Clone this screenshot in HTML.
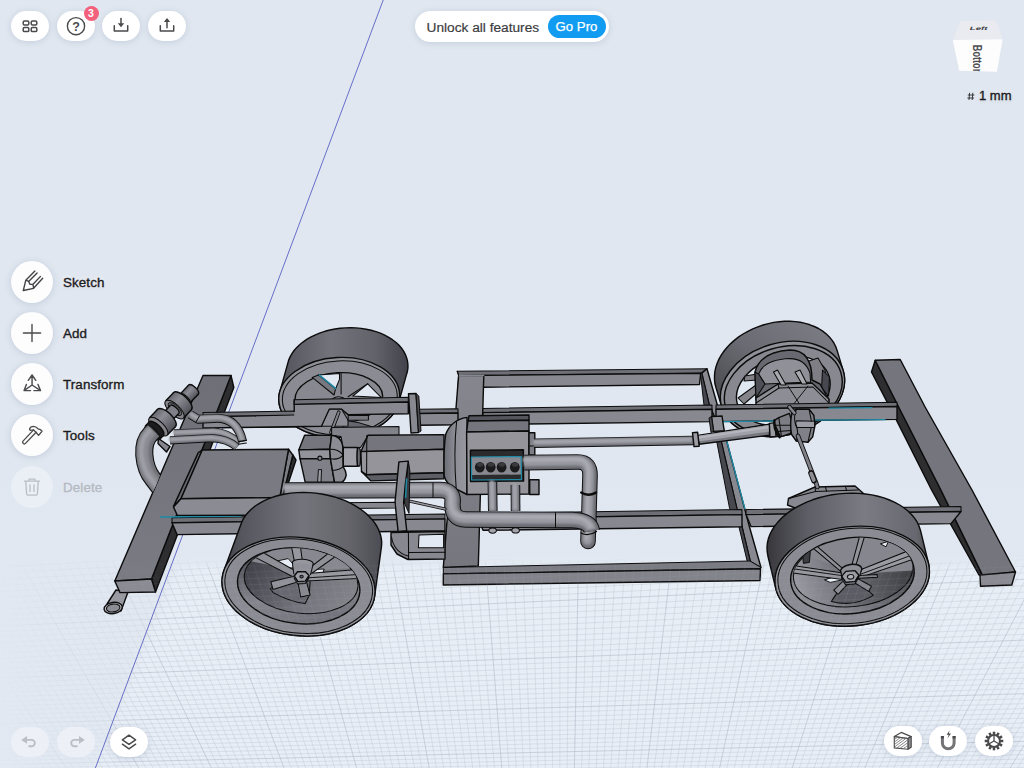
<!DOCTYPE html>
<html><head><meta charset="utf-8"><title>Shapr3D</title><style>
*{box-sizing:border-box;margin:0;padding:0}
html,body{width:1024px;height:768px;overflow:hidden}
body{font-family:"Liberation Sans", sans-serif;background:#dfe7f0;position:relative}
#bg{position:absolute;left:0;top:0;width:1024px;height:768px;background:linear-gradient(180deg,#e0e7f0 0%,#e0e7f0 60%,#e2e9f2 100%)}
svg{position:absolute;left:0;top:0}
.btn{position:absolute;width:38px;height:30px;border-radius:15px;background:#fff;box-shadow:0 1px 6px rgba(120,140,170,.28)}
.btn.dis{background:rgba(240,243,248,.75);box-shadow:none}
.circ{position:absolute;left:11px;width:42px;height:42px;border-radius:21px;background:#fdfdfe;box-shadow:0 1px 7px rgba(120,140,170,.30)}
.circ.dis{background:rgba(236,240,246,.8);box-shadow:none}
.lbl{position:absolute;left:63px;font-size:13.4px;color:#1c1c1e;-webkit-text-stroke:.35px #1c1c1e;letter-spacing:.1px;text-shadow:0 0 4px #fff,0 0 7px rgba(255,255,255,.9),0 1px 3px rgba(90,100,120,.35);line-height:16px;height:16px}
.lbl.dis{color:#b4b9c2;-webkit-text-stroke:.3px #b4b9c2;text-shadow:none}
#pill{position:absolute;left:415px;top:11px;width:194px;height:31px;border-radius:15.5px;background:#fff;box-shadow:0 1px 6px rgba(120,140,170,.28)}
#pill .t{position:absolute;left:11.5px;top:9.4px;font-size:13.7px;line-height:16px;color:#3c3c40;-webkit-text-stroke:.2px #3c3c40}
#gopro{position:absolute;left:132.5px;top:4px;width:58px;height:23px;border-radius:11.5px;background:#119cf2;color:#fff;font-size:13.2px;line-height:23.6px;text-align:center;-webkit-text-stroke:.25px #fff}
#badge{position:absolute;left:83.5px;top:5.5px;width:15px;height:15px;border-radius:7.5px;background:#f2607b;color:#fff;font-size:10.5px;font-weight:bold;line-height:15px;text-align:center}
#mm{position:absolute;left:979px;top:88px;font-size:13px;line-height:16px;color:#1c1c1e;-webkit-text-stroke:.35px #1c1c1e;text-shadow:0 0 4px #fff,0 1px 3px rgba(90,100,120,.4)}
</style></head><body>
<div id="bg"></div>
<svg width="1024" height="768" viewBox="0 0 1024 768"><defs><linearGradient id="gf" x1="0" y1="559" x2="0" y2="580" gradientUnits="userSpaceOnUse"><stop offset="0" stop-color="#fff" stop-opacity="0"/><stop offset=".4" stop-color="#fff" stop-opacity=".7"/><stop offset="1" stop-color="#fff" stop-opacity="1"/></linearGradient><linearGradient id="gfx" x1="0" y1="0" x2="150" y2="0" gradientUnits="userSpaceOnUse"><stop offset="0" stop-color="#000" stop-opacity=".95"/><stop offset=".35" stop-color="#000" stop-opacity=".45"/><stop offset="1" stop-color="#000" stop-opacity="0"/></linearGradient><filter id="gb" x="0" y="0" width="1024" height="768" filterUnits="userSpaceOnUse"><feGaussianBlur stdDeviation="5"/></filter><mask id="gm" maskUnits="userSpaceOnUse" x="0" y="0" width="1024" height="768"><rect x="0" y="0" width="1024" height="768" fill="url(#gf)"/><polygon points="0,540 181,540 92,776 0,776" fill="#000" opacity=".5"/><rect x="0" y="0" width="150" height="768" fill="url(#gfx)"/></mask></defs><polygon points="178,566 1030,566 1030,775 92,775" fill="#eaf0f7" opacity=".8" filter="url(#gb)"/><g mask="url(#gm)"><g id="gl"><path d="M-404.6 556.0L-183.9 772.0M-395.2 556.0L-176.7 772.0M-385.9 556.0L-169.4 772.0M-376.5 556.0L-162.2 772.0M-367.1 556.0L-155.0 772.0M-348.4 556.0L-140.5 772.0M-339.0 556.0L-133.3 772.0M-329.7 556.0L-126.1 772.0M-320.3 556.0L-118.9 772.0M-310.9 556.0L-111.7 772.0M-301.6 556.0L-104.4 772.0M-292.2 556.0L-97.2 772.0M-282.9 556.0L-90.0 772.0M-273.5 556.0L-82.8 772.0M-254.8 556.0L-68.3 772.0M-245.4 556.0L-61.1 772.0M-236.0 556.0L-53.9 772.0M-226.7 556.0L-46.7 772.0M-217.3 556.0L-39.5 772.0M-208.0 556.0L-32.2 772.0M-198.6 556.0L-25.0 772.0M-189.2 556.0L-17.8 772.0M-179.9 556.0L-10.6 772.0M-161.1 556.0L3.9 772.0M-151.8 556.0L11.1 772.0M-142.4 556.0L18.3 772.0M-133.0 556.0L25.5 772.0M-123.7 556.0L32.8 772.0M-114.3 556.0L40.0 772.0M-105.0 556.0L47.2 772.0M-95.6 556.0L54.4 772.0M-86.2 556.0L61.6 772.0M-67.5 556.0L76.1 772.0M-58.1 556.0L83.3 772.0M-48.8 556.0L90.5 772.0M-39.4 556.0L97.7 772.0M-30.1 556.0L105.0 772.0M-20.7 556.0L112.2 772.0M-11.3 556.0L119.4 772.0M-2.0 556.0L126.6 772.0M7.4 556.0L133.8 772.0M26.1 556.0L148.3 772.0M35.5 556.0L155.5 772.0M44.9 556.0L162.7 772.0M54.2 556.0L169.9 772.0M63.6 556.0L177.2 772.0M72.9 556.0L184.4 772.0M82.3 556.0L191.6 772.0M91.7 556.0L198.8 772.0M101.0 556.0L206.0 772.0M119.8 556.0L220.5 772.0M129.1 556.0L227.7 772.0M138.5 556.0L234.9 772.0M147.8 556.0L242.2 772.0M157.2 556.0L249.4 772.0M166.6 556.0L256.6 772.0M175.9 556.0L263.8 772.0M185.3 556.0L271.0 772.0M194.7 556.0L278.3 772.0M213.4 556.0L292.7 772.0M222.8 556.0L299.9 772.0M232.1 556.0L307.1 772.0M241.5 556.0L314.4 772.0M250.8 556.0L321.6 772.0M260.2 556.0L328.8 772.0M269.6 556.0L336.0 772.0M278.9 556.0L343.2 772.0M288.3 556.0L350.5 772.0M307.0 556.0L364.9 772.0M316.4 556.0L372.1 772.0M325.7 556.0L379.3 772.0M335.1 556.0L386.6 772.0M344.5 556.0L393.8 772.0M353.8 556.0L401.0 772.0M363.2 556.0L408.2 772.0M372.6 556.0L415.4 772.0M381.9 556.0L422.7 772.0M400.7 556.0L437.1 772.0M410.0 556.0L444.3 772.0M419.4 556.0L451.6 772.0M428.7 556.0L458.8 772.0M438.1 556.0L466.0 772.0M447.5 556.0L473.2 772.0M456.8 556.0L480.4 772.0M466.2 556.0L487.7 772.0M475.6 556.0L494.9 772.0M494.3 556.0L509.3 772.0M503.6 556.0L516.5 772.0M513.0 556.0L523.8 772.0M522.4 556.0L531.0 772.0M531.7 556.0L538.2 772.0M541.1 556.0L545.4 772.0M550.5 556.0L552.6 772.0M559.8 556.0L559.9 772.0M569.2 556.0L567.1 772.0M587.9 556.0L581.5 772.0M597.3 556.0L588.7 772.0M606.6 556.0L596.0 772.0M616.0 556.0L603.2 772.0M625.4 556.0L610.4 772.0M634.7 556.0L617.6 772.0M644.1 556.0L624.9 772.0M653.5 556.0L632.1 772.0M662.8 556.0L639.3 772.0M681.5 556.0L653.7 772.0M690.9 556.0L661.0 772.0M700.3 556.0L668.2 772.0M709.6 556.0L675.4 772.0M719.0 556.0L682.6 772.0M728.4 556.0L689.8 772.0M737.7 556.0L697.1 772.0M747.1 556.0L704.3 772.0M756.5 556.0L711.5 772.0M775.2 556.0L725.9 772.0M784.5 556.0L733.2 772.0M793.9 556.0L740.4 772.0M803.3 556.0L747.6 772.0M812.6 556.0L754.8 772.0M822.0 556.0L762.0 772.0M831.4 556.0L769.3 772.0M840.7 556.0L776.5 772.0M850.1 556.0L783.7 772.0M868.8 556.0L798.1 772.0M878.2 556.0L805.4 772.0M887.5 556.0L812.6 772.0M896.9 556.0L819.8 772.0M906.3 556.0L827.0 772.0M915.6 556.0L834.3 772.0M925.0 556.0L841.5 772.0M934.4 556.0L848.7 772.0M943.7 556.0L855.9 772.0M962.4 556.0L870.4 772.0M971.8 556.0L877.6 772.0M981.2 556.0L884.8 772.0M990.5 556.0L892.0 772.0M999.9 556.0L899.2 772.0M1009.3 556.0L906.5 772.0M1018.6 556.0L913.7 772.0M1028.0 556.0L920.9 772.0M1037.3 556.0L928.1 772.0M1056.1 556.0L942.6 772.0M1065.4 556.0L949.8 772.0M1074.8 556.0L957.0 772.0M1084.2 556.0L964.2 772.0M1093.5 556.0L971.4 772.0M1102.9 556.0L978.7 772.0M1112.3 556.0L985.9 772.0M1121.6 556.0L993.1 772.0M1131.0 556.0L1000.3 772.0M1149.7 556.0L1014.8 772.0M1159.1 556.0L1022.0 772.0M1168.4 556.0L1029.2 772.0M1177.8 556.0L1036.4 772.0M1187.2 556.0L1043.7 772.0M1196.5 556.0L1050.9 772.0M1205.9 556.0L1058.1 772.0M1215.2 556.0L1065.3 772.0M1224.6 556.0L1072.5 772.0M1243.3 556.0L1087.0 772.0M1252.7 556.0L1094.2 772.0M1262.1 556.0L1101.4 772.0M1271.4 556.0L1108.6 772.0M1280.8 556.0L1115.9 772.0M1290.2 556.0L1123.1 772.0M1299.5 556.0L1130.3 772.0M1308.9 556.0L1137.5 772.0M1318.2 556.0L1144.7 772.0M1337.0 556.0L1159.2 772.0M1346.3 556.0L1166.4 772.0M1355.7 556.0L1173.6 772.0M1365.1 556.0L1180.8 772.0M0 554.0L1024 495.0M0 560.5L1024 502.6M0 573.2L1024 517.4M0 579.4L1024 524.7M0 585.5L1024 531.8M0 591.5L1024 538.9M0 597.5L1024 545.9M0 603.4L1024 552.7M0 609.2L1024 559.5M0 614.9L1024 566.2M0 620.5L1024 572.8M0 631.6L1024 585.8M0 637.0L1024 592.1M0 642.4L1024 598.4M0 647.6L1024 604.6M0 652.9L1024 610.7M0 658.0L1024 616.7M0 663.1L1024 622.7M0 668.1L1024 628.5M0 673.1L1024 634.3M0 682.8L1024 645.7M0 687.6L1024 651.3M0 692.3L1024 656.8M0 696.9L1024 662.3M0 701.6L1024 667.7M0 706.1L1024 673.0M0 710.6L1024 678.3M0 715.0L1024 683.5M0 719.4L1024 688.6M0 728.1L1024 698.7M0 732.3L1024 703.7M0 736.5L1024 708.6M0 740.6L1024 713.4M0 744.7L1024 718.2M0 748.8L1024 723.0M0 752.8L1024 727.7M0 756.8L1024 732.3M0 760.7L1024 736.9M0 768.4L1024 745.9M0 772.2L1024 750.4M0 775.9L1024 754.7M0 779.6L1024 759.1M0 783.3L1024 763.4M0 786.9L1024 767.6M0 790.5L1024 771.8M0 794.1L1024 776.0M0 797.6L1024 780.1M0 804.5L1024 788.2M0 807.9L1024 792.2M0 811.3L1024 796.1M0 814.6L1024 800.1" stroke="#a9b4c4" stroke-width=".7" fill="none" opacity=".27"/><path d="M-357.8 556.0L-147.8 772.0M-264.1 556.0L-75.6 772.0M-170.5 556.0L-3.4 772.0M-76.9 556.0L68.9 772.0M16.8 556.0L141.1 772.0M110.4 556.0L213.3 772.0M204.0 556.0L285.5 772.0M297.7 556.0L357.7 772.0M391.3 556.0L429.9 772.0M484.9 556.0L502.1 772.0M578.6 556.0L574.3 772.0M672.2 556.0L646.5 772.0M765.8 556.0L718.7 772.0M859.4 556.0L790.9 772.0M953.1 556.0L863.1 772.0M1046.7 556.0L935.3 772.0M1140.3 556.0L1007.6 772.0M1234.0 556.0L1079.8 772.0M1327.6 556.0L1152.0 772.0M0 566.9L1024 510.0M0 626.1L1024 579.3M0 678.0L1024 640.1M0 723.8L1024 693.7M0 764.5L1024 741.4M0 801.1L1024 784.2" stroke="#9ca7b8" stroke-width=".95" fill="none" opacity=".31"/></g></g></svg>
<svg width="1024" height="768" viewBox="0 0 1024 768"><line x1="383.6" y1="-1" x2="95" y2="769" stroke="#666fc8" stroke-width="1"/></svg>
<svg width="1024" height="768" viewBox="0 0 1024 768">
<defs>
<filter id="soft" x="-5%" y="-5%" width="110%" height="110%" filterUnits="userSpaceOnUse" ><feGaussianBlur stdDeviation=".9"/></filter>
<linearGradient id="gTireA" x1="0" y1="0" x2="1" y2="0"><stop offset="0" stop-color="#3e3f46"/><stop offset=".12" stop-color="#55565d"/><stop offset=".5" stop-color="#74757c"/><stop offset=".8" stop-color="#64646a"/><stop offset="1" stop-color="#4c4d54"/></linearGradient>
<linearGradient id="gTireB" x1="0" y1="0" x2="1" y2="0"><stop offset="0" stop-color="#52535a"/><stop offset=".4" stop-color="#73747b"/><stop offset=".75" stop-color="#62636a"/><stop offset="1" stop-color="#42434a"/></linearGradient>
<linearGradient id="gTireC" x1="0" y1="1" x2="1" y2="0"><stop offset="0" stop-color="#37373b"/><stop offset=".5" stop-color="#6a6b72"/><stop offset="1" stop-color="#808188"/></linearGradient>
<linearGradient id="gDish" x1="0" y1="0" x2="1" y2="1"><stop offset="0" stop-color="#77787f"/><stop offset=".55" stop-color="#5a5b62"/><stop offset="1" stop-color="#3d3d41"/></linearGradient>
<linearGradient id="gDish2" x1="1" y1="0" x2="0" y2="1"><stop offset="0" stop-color="#6c6d74"/><stop offset="1" stop-color="#444448"/></linearGradient>
<linearGradient id="gPipeH" x1="0" y1="0" x2="0" y2="1"><stop offset="0" stop-color="#8e8f96"/><stop offset=".3" stop-color="#bcbdc4"/><stop offset=".6" stop-color="#a6a7ae"/><stop offset="1" stop-color="#707178"/></linearGradient>
<linearGradient id="gPipeV" x1="0" y1="0" x2="1" y2="0"><stop offset="0" stop-color="#8e8f96"/><stop offset=".35" stop-color="#bcbdc4"/><stop offset=".65" stop-color="#a6a7ae"/><stop offset="1" stop-color="#707178"/></linearGradient>
<linearGradient id="gDome" x1="0" y1="0" x2="1" y2="0"><stop offset="0" stop-color="#6c6d74"/><stop offset=".5" stop-color="#8e8f96"/><stop offset="1" stop-color="#97989f"/></linearGradient>
<linearGradient id="gBar" x1="0" y1="0" x2="0" y2="1"><stop offset="0" stop-color="#6f7077"/><stop offset="1" stop-color="#7b7c83"/></linearGradient>
<linearGradient id="gFront" x1="0" y1="0" x2="0" y2="1"><stop offset="0" stop-color="#909198"/><stop offset="1" stop-color="#77787f"/></linearGradient>
<linearGradient id="gTireD" x1="0" y1="0" x2="1" y2="0"><stop offset="0" stop-color="#37373b"/><stop offset=".25" stop-color="#5e5f66"/><stop offset=".6" stop-color="#7b7c83"/><stop offset=".92" stop-color="#67686f"/><stop offset="1" stop-color="#4c4c50"/></linearGradient>
<linearGradient id="gDishR" x1="0" y1="1" x2="1" y2=".2"><stop offset="0" stop-color="#a2a3aa"/><stop offset=".45" stop-color="#707178"/><stop offset="1" stop-color="#37373b"/></linearGradient>
<linearGradient id="gDishL" x1=".7" y1="1" x2=".1" y2="0"><stop offset="0" stop-color="#707178"/><stop offset=".4" stop-color="#85868d"/><stop offset="1" stop-color="#404148"/></linearGradient>
<linearGradient id="gBackR" x1="0" y1=".6" x2="1" y2=".5"><stop offset="0" stop-color="#9a9ba2"/><stop offset=".5" stop-color="#66676e"/><stop offset="1" stop-color="#3c3c40"/></linearGradient>
<linearGradient id="gBackL" x1="0" y1=".3" x2="1" y2=".6"><stop offset="0" stop-color="#3e3f46"/><stop offset=".3" stop-color="#57585f"/><stop offset=".6" stop-color="#73747b"/><stop offset="1" stop-color="#83838a"/></linearGradient>
<linearGradient id="gLeftM" x1="0" y1="0" x2="0" y2="1"><stop offset="0" stop-color="#86878e"/><stop offset="1" stop-color="#76777e"/></linearGradient>
</defs>

<polygon points="278.8,400.6 278.8,397.1 279.3,393.6 280.3,390.1 288.6,360.4 290.0,357.1 291.9,353.7 294.1,350.5 296.8,347.4 299.9,344.5 303.3,341.8 307.1,339.2 311.1,336.9 315.5,334.8 320.1,332.9 324.9,331.3 329.9,330.0 334.9,329.0 340.1,328.3 345.4,327.9 350.7,327.7 355.9,327.9 361.1,328.4 366.2,329.2 371.1,330.2 375.9,331.6 380.4,333.2 384.7,335.1 388.7,337.3 392.4,339.7 395.8,342.2 398.8,345.0 401.4,348.0 403.6,351.1 405.3,354.3 406.6,357.7 407.5,361.1 407.9,364.5 407.9,368.0 407.4,371.5 406.4,374.9 398.1,404.6 396.7,408.1 394.8,411.4 392.6,414.6 389.9,417.7 386.8,420.6 383.4,423.3 379.6,425.9 375.6,428.2 371.2,430.3 366.6,432.2 361.8,433.8 356.9,435.1 351.8,436.1 346.6,436.8 341.3,437.2 336.0,437.4 330.8,437.2 325.6,436.7 320.5,435.9 315.6,434.9 310.8,433.5 306.3,431.9 302.0,430.0 298.0,427.8 294.3,425.4 290.9,422.9 287.9,420.1 285.3,417.1 283.1,414.0 281.4,410.8 280.1,407.4 279.2,404.0" fill="url(#gTireB)" stroke="#0c0c0d" stroke-width="1.42" stroke-linejoin="round" />
<ellipse cx="339.2" cy="397.4" rx="60.5" ry="39.9" transform="rotate(-3 339.2 397.4)" fill="#909198" stroke="#0c0c0d" stroke-width="1.42" />
<ellipse cx="339.8" cy="397.8" rx="57.5" ry="36.9" transform="rotate(-3 339.8 397.8)" fill="#8b8c93" stroke="#0c0c0d" stroke-width="1.05" />
<ellipse cx="338.8" cy="398.0" rx="43.9" ry="25.3" transform="rotate(-3 338.8 398.0)" fill="#888990" stroke="#0c0c0d" stroke-width="1.42" />
<polygon points="318.4,374.9 339.5,373.6 339.5,379.4 335.6,388.8" fill="#e1e8f1" stroke="#0c0c0d" stroke-width="1.05" stroke-linejoin="round" />
<polygon points="312.2,377.4 318.4,374.9 335.6,388.8 334.0,395.0" fill="#77787f" stroke="#0c0c0d" stroke-width="1.05" stroke-linejoin="round" />
<polyline points="319.4,375.2 335.9,388.6" fill="none" stroke="#1f8aa5" stroke-width="1.5" stroke-linecap="round" stroke-linejoin="round" />
<polygon points="367.7,383.8 381.4,397.6 352.8,396.0" fill="#e1e8f1" stroke="#0c0c0d" stroke-width="1.05" stroke-linejoin="round" />
<polyline points="341.1,373.4 341.1,394.0" fill="none" stroke="#0c0c0d" stroke-width="1.05" stroke-linecap="round" stroke-linejoin="round" />
<polyline points="367.7,383.6 348.1,396.8" fill="none" stroke="#0c0c0d" stroke-width="1.05" stroke-linecap="round" stroke-linejoin="round" />
<path d="M330 401 Q338 393 346.6 400 Z" fill="#909198" stroke="#0c0c0d" stroke-width="1.05" stroke-linejoin="round" stroke-linecap="round" />
<path d="M343 420 Q372 423 398 440 L384 441 Q365 432 343 428 Z" fill="#66676e" stroke="#0c0c0d" stroke-width="1.05" stroke-linejoin="round" stroke-linecap="round" />
<polygon points="714.5,375.4 714.9,371.3 715.9,367.1 717.3,363.0 719.1,358.9 721.4,354.9 724.1,351.0 727.2,347.2 730.7,343.6 734.6,340.1 738.7,336.9 743.1,334.0 747.9,331.3 752.8,328.9 757.9,326.8 763.1,325.0 768.4,323.6 773.8,322.4 779.2,321.7 784.6,321.3 790.0,321.3 795.2,321.6 800.3,322.3 805.2,323.4 809.9,324.8 814.3,326.5 818.5,328.5 822.3,330.9 825.8,333.6 828.9,336.5 831.6,339.6 833.9,343.0 835.7,346.6 837.1,350.4 843.1,370.4 844.1,374.3 844.5,378.3 844.5,382.4 844.1,386.5 843.1,390.6 841.7,394.8 839.9,398.9 837.6,402.9 834.9,406.8 831.8,410.6 828.3,414.2 824.4,417.6 820.3,420.9 815.9,423.8 811.1,426.5 806.2,428.9 801.1,431.0 795.9,432.8 790.6,434.2 785.2,435.4 779.8,436.1 774.4,436.5 769.0,436.5 763.8,436.2 758.7,435.5 753.8,434.4 749.1,433.1 744.7,431.3 740.5,429.3 736.7,426.9 733.2,424.2 730.1,421.3 727.4,418.2 725.1,414.8 723.3,411.2 721.9,407.4 715.9,387.4 714.9,383.5 714.5,379.5" fill="url(#gTireC)" stroke="#0c0c0d" stroke-width="1.42" stroke-linejoin="round" />
<ellipse cx="782.5" cy="388.9" rx="63.4" ry="45.9" transform="rotate(-17 782.5 388.9)" fill="#909198" stroke="#0c0c0d" stroke-width="1.42" />
<ellipse cx="783.3" cy="390.1" rx="60.2" ry="42.7" transform="rotate(-17 783.3 390.1)" fill="#888990" stroke="#0c0c0d" stroke-width="1.42" />
<ellipse cx="783.3" cy="390.5" rx="47.9" ry="33.5" transform="rotate(-17 783.3 390.5)" fill="#dfe7f0" stroke="#0c0c0d" stroke-width="1.42" />
<polygon points="738.0,398.0 756.0,385.0 758.0,392.0 744.0,404.0" fill="#84848a" stroke="#0c0c0d" stroke-width="1.05" stroke-linejoin="round" />
<polygon points="745.0,376.0 757.0,374.0 757.0,380.0 744.0,381.0" fill="#808086" stroke="#0c0c0d" stroke-width="1.05" stroke-linejoin="round" />
<polygon points="806.0,362.0 818.0,358.0 826.0,372.0 824.0,392.0 812.0,384.0" fill="#7e7e84" stroke="#0c0c0d" stroke-width="1.05" stroke-linejoin="round" />
<polygon points="822.5,370.0 829.5,377.0 828.6,396.0 821.6,388.0" fill="#47484f" stroke="#0c0c0d" stroke-width="1.05" stroke-linejoin="round" />
<path d="M756 400 L755 372 Q760 352 790 350 Q812 350 812 380 L820 384 L829 400 Z" fill="#686970" stroke="#0c0c0d" stroke-width="1.42" stroke-linejoin="round" stroke-linecap="round" />
<path d="M758.6 374 Q764 359.6 790 358.6 Q805 358.6 810 373 L810.6 382 L765 384 Z" fill="#909198" stroke="#0c0c0d" stroke-width="1.05" stroke-linejoin="round" stroke-linecap="round" />
<polygon points="755.0,372.0 758.6,374.0 765.0,384.0 756.0,398.0" fill="#4e4f56" stroke="#0c0c0d" stroke-width="1.05" stroke-linejoin="round" />
<polygon points="756.0,398.0 778.0,384.0 812.0,383.0 829.0,399.0 829.0,405.0 756.0,406.0" fill="#8d8e95" stroke="#0c0c0d" stroke-width="1.42" stroke-linejoin="round" />
<polyline points="778.0,384.0 779.0,388.0 756.0,403.0" fill="none" stroke="#0c0c0d" stroke-width="1.05" stroke-linecap="round" stroke-linejoin="round" />
<polyline points="779.0,388.0 813.0,387.0 829.0,403.0" fill="none" stroke="#0c0c0d" stroke-width="1.05" stroke-linecap="round" stroke-linejoin="round" />
<polygon points="773.5,372.0 777.5,370.0 786.0,385.0 781.0,385.0" fill="#a9aab1" stroke="#0c0c0d" stroke-width="1.05" stroke-linejoin="round" />
<polygon points="795.0,372.0 800.0,370.0 807.0,384.0 802.0,384.0" fill="#a9aab1" stroke="#0c0c0d" stroke-width="1.05" stroke-linejoin="round" />
<polyline points="788.0,386.0 802.0,408.0" fill="none" stroke="#0c0c0d" stroke-width="0.95" stroke-linecap="round" stroke-linejoin="round" />
<polyline points="808.0,386.0 789.0,410.0" fill="none" stroke="#0c0c0d" stroke-width="0.95" stroke-linecap="round" stroke-linejoin="round" />
<polygon points="107.0,604.0 116.0,590.0 128.0,592.0 121.0,611.0" fill="#999aa1" stroke="#0c0c0d" stroke-width="1.42" stroke-linejoin="round" />
<ellipse cx="113.2" cy="608.0" rx="9.2" ry="5.6" transform="rotate(-8 113.2 608.0)" fill="#b9bac1" stroke="#0c0c0d" stroke-width="1.42" />
<ellipse cx="113.2" cy="608.0" rx="6.8" ry="3.9" transform="rotate(-8 113.2 608.0)" fill="#8d8e95" stroke="#0c0c0d" stroke-width="1.05" />
<polygon points="231.0,375.5 233.8,387.5 155.5,592.0 151.5,579.0" fill="#2e2e31" stroke="#0c0c0d" stroke-width="1.42" stroke-linejoin="round" />
<polygon points="203.0,375.5 231.0,375.5 151.5,579.0 114.8,581.0" fill="url(#gBar)" stroke="#0c0c0d" stroke-width="1.42" stroke-linejoin="round" />
<polygon points="114.8,581.0 151.5,579.0 155.5,592.0 120.0,592.6" fill="#8b8c93" stroke="#0c0c0d" stroke-width="1.42" stroke-linejoin="round" />
<polygon points="875.2,360.3 871.5,372.0 895.8,418.8 931.6,490.0 979.0,575.0 982.6,575.4 940.9,490.0 899.3,408.2" fill="#2e2e31" stroke="#0c0c0d" stroke-width="1.42" stroke-linejoin="round" />
<polygon points="875.2,360.3 900.2,359.5 925.1,407.0 972.0,490.0 1015.5,572.0 982.6,575.4 940.9,490.0 899.3,408.2" fill="#75767d" stroke="#0c0c0d" stroke-width="1.42" stroke-linejoin="round" />
<polygon points="980.0,575.0 1015.5,572.0 1011.8,585.0 980.5,586.3" fill="#8b8c93" stroke="#0c0c0d" stroke-width="1.42" stroke-linejoin="round" />
<polygon points="457.2,371.3 707.0,368.7 700.7,373.3 459.0,375.6" fill="#6f7077" stroke="#0c0c0d" stroke-width="1.05" stroke-linejoin="round" />
<polygon points="459.0,375.6 700.7,373.3 699.5,384.5 483.5,387.2 458.0,387.4" fill="#888990" stroke="#0c0c0d" stroke-width="1.42" stroke-linejoin="round" />
<polygon points="458.6,375.6 483.8,375.4 478.3,566.0 443.3,567.5" fill="url(#gLeftM)" stroke="#0c0c0d" stroke-width="1.42" stroke-linejoin="round" />
<polyline points="458.8,375.6 483.6,375.4" fill="none" stroke="#86878e" stroke-width="1.6" stroke-linecap="round" stroke-linejoin="round" />
<polyline points="457.2,371.3 458.6,375.6" fill="none" stroke="#0c0c0d" stroke-width="1.05" stroke-linecap="round" stroke-linejoin="round" />
<polygon points="707.0,368.7 717.2,404.5 721.6,422.0 744.6,508.5 749.5,527.0 761.0,567.5 750.4,561.7 742.1,527.0 736.9,508.5 716.7,422.0 709.2,404.5 701.8,373.1" fill="#888990" stroke="#0c0c0d" stroke-width="1.42" stroke-linejoin="round" />
<polygon points="701.8,373.1 709.2,404.5 716.7,422.0 736.9,508.5 742.1,527.0 750.4,561.7 747.3,561.7 739.0,527.0 729.6,508.5 713.0,422.0 703.9,404.5 700.4,373.1" fill="#47484f" stroke="#0c0c0d" stroke-width="1" stroke-linejoin="round" />
<polygon points="443.3,567.5 750.0,561.0 761.0,567.5 760.5,568.7 443.3,573.9" fill="#7b7c83" stroke="#0c0c0d" stroke-width="1" stroke-linejoin="round" />
<polygon points="443.3,573.9 760.5,568.7 760.0,580.5 443.3,585.0" fill="#83848b" stroke="#0c0c0d" stroke-width="1.42" stroke-linejoin="round" />
<polygon points="203.0,412.5 296.0,411.1 296.0,415.3 203.0,416.7" fill="#6f7077" stroke="#0c0c0d" stroke-width="1.05" stroke-linejoin="round" />
<polygon points="203.0,416.7 296.0,415.3 296.0,426.8 203.0,428.0" fill="#888990" stroke="#0c0c0d" stroke-width="1.42" stroke-linejoin="round" />
<polygon points="418.0,409.3 458.0,408.8 458.0,413.0 418.0,413.5" fill="#6f7077" stroke="#0c0c0d" stroke-width="1.05" stroke-linejoin="round" />
<polygon points="418.0,413.5 458.0,413.0 458.0,424.8 418.0,425.3" fill="#888990" stroke="#0c0c0d" stroke-width="1.42" stroke-linejoin="round" />
<polygon points="483.0,408.4 712.0,405.0 712.0,409.2 483.0,412.6" fill="#6f7077" stroke="#0c0c0d" stroke-width="1.05" stroke-linejoin="round" />
<polygon points="483.0,412.6 712.0,409.2 712.0,421.6 483.0,424.5" fill="#888990" stroke="#0c0c0d" stroke-width="1.42" stroke-linejoin="round" />
<polygon points="716.0,405.0 897.0,402.3 897.0,406.5 716.0,409.2" fill="#6f7077" stroke="#0c0c0d" stroke-width="1.05" stroke-linejoin="round" />
<polygon points="716.0,409.2 897.0,406.5 897.0,419.4 716.0,421.6" fill="#888990" stroke="#0c0c0d" stroke-width="1.42" stroke-linejoin="round" />
<polygon points="294.2,399.7 408.3,397.3 408.3,402.0 294.2,404.4" fill="#6f7077" stroke="#0c0c0d" stroke-width="1.05" stroke-linejoin="round" />
<polygon points="294.2,404.4 408.3,402.0 408.3,413.8 348.0,414.6 341.6,409.2 329.4,409.2 321.6,426.3 256.0,427.3 256.0,416.4 294.2,415.6" fill="#888990" stroke="#0c0c0d" stroke-width="0" stroke-linejoin="round" />
<polyline points="294.2,404.4 408.3,402.0 408.3,413.8 348.0,414.6 341.6,409.2 329.4,409.2 321.6,426.3 256.0,427.3" fill="none" stroke="#0c0c0d" stroke-width="1.42" stroke-linecap="round" stroke-linejoin="round" />
<polyline points="294.2,399.7 294.2,411.4" fill="none" stroke="#0c0c0d" stroke-width="1.42" stroke-linecap="round" stroke-linejoin="round" />
<polygon points="329.4,409.2 341.6,409.2 348.0,420.0 348.0,426.0 321.6,426.3" fill="#8d8e95" stroke="#0c0c0d" stroke-width="1.05" stroke-linejoin="round" />
<polyline points="338.8,412.2 331.0,432.5" fill="none" stroke="#0c0c0d" stroke-width="3.6" stroke-linecap="round" stroke-linejoin="round" />
<polyline points="338.8,412.2 331.0,432.5" fill="none" stroke="#808188" stroke-width="2" stroke-linecap="round" stroke-linejoin="round" />
<polygon points="348.2,415.4 368.4,415.2 368.4,420.0 348.2,420.2" fill="#77787f" stroke="#0c0c0d" stroke-width="1.05" stroke-linejoin="round" />
<polygon points="172.0,517.8 445.0,513.9 445.0,518.9 172.0,522.8" fill="#6f7077" stroke="#0c0c0d" stroke-width="1.05" stroke-linejoin="round" />
<polygon points="172.0,522.8 445.0,518.9 445.0,530.8 177.0,534.6" fill="#888990" stroke="#0c0c0d" stroke-width="1.42" stroke-linejoin="round" />
<polygon points="478.0,513.4 742.0,509.6 742.0,514.6 478.0,518.4" fill="#6f7077" stroke="#0c0c0d" stroke-width="1.05" stroke-linejoin="round" />
<polygon points="478.0,518.4 742.0,514.6 742.0,526.7 483.0,530.3" fill="#888990" stroke="#0c0c0d" stroke-width="1.42" stroke-linejoin="round" />
<polygon points="746.0,509.6 961.0,506.5 961.0,511.5 746.0,514.6" fill="#6f7077" stroke="#0c0c0d" stroke-width="1.05" stroke-linejoin="round" />
<polygon points="746.0,514.6 961.0,511.5 951.0,523.6 751.0,526.6" fill="#888990" stroke="#0c0c0d" stroke-width="1.42" stroke-linejoin="round" />
<polyline points="160.5,517.0 241.0,516.0" fill="none" stroke="#1f8aa5" stroke-width="1.3" stroke-linecap="round" stroke-linejoin="round" />
<polyline points="723.0,421.6 775.0,421.0" fill="none" stroke="#1f8aa5" stroke-width="1.3" stroke-linecap="round" stroke-linejoin="round" />
<polyline points="815.0,420.2 885.0,419.6" fill="none" stroke="#1f8aa5" stroke-width="1.3" stroke-linecap="round" stroke-linejoin="round" />
<polyline points="829.0,408.2 872.0,407.6" fill="none" stroke="#1f8aa5" stroke-width="1.3" stroke-linecap="round" stroke-linejoin="round" />
<polyline points="721.8,422.5 744.8,508.5" fill="none" stroke="#1f8aa5" stroke-width="1.3" stroke-linecap="round" stroke-linejoin="round" />
<polygon points="408.5,393.8 416.0,393.5 418.5,432.5 411.0,433.0" fill="#888990" stroke="#0c0c0d" stroke-width="1.42" stroke-linejoin="round" />
<polygon points="416.0,393.5 418.8,396.0 421.0,431.0 418.5,432.5" fill="#4c4c50" stroke="#0c0c0d" stroke-width="0.95" stroke-linejoin="round" />
<polygon points="292.8,455.0 296.0,460.0 286.0,490.0 283.6,493.4" fill="#2e2e31" stroke="#0c0c0d" stroke-width="1.42" stroke-linejoin="round" />
<polygon points="288.5,449.3 292.8,455.0 283.6,493.4 279.8,497.5" fill="#7e7f86" stroke="#0c0c0d" stroke-width="1.42" stroke-linejoin="round" />
<polygon points="202.3,450.0 198.3,452.6 173.5,506.4 181.0,498.8" fill="#66676e" stroke="#0c0c0d" stroke-width="1.42" stroke-linejoin="round" />
<polygon points="202.3,450.0 288.5,449.3 279.8,497.5 181.0,498.8" fill="#7a7b82" stroke="#0c0c0d" stroke-width="1.42" stroke-linejoin="round" />
<polygon points="181.0,498.8 279.8,497.5 274.0,515.2 177.3,515.4 173.5,507.0" fill="#8b8c93" stroke="#0c0c0d" stroke-width="1.42" stroke-linejoin="round" />
<polygon points="331.6,427.6 399.0,426.6 399.0,435.6 368.0,436.0 360.6,447.5 343.0,447.5 341.0,436.4 331.6,435.2" fill="#82838a" stroke="#0c0c0d" stroke-width="1.05" stroke-linejoin="round" />
<polygon points="304.6,435.2 331.6,435.2 329.8,449.3 298.8,449.9" fill="#75767d" stroke="#0c0c0d" stroke-width="1.42" stroke-linejoin="round" />
<polygon points="298.8,449.9 329.8,449.3 330.4,458.7 300.0,458.7" fill="#93949b" stroke="#0c0c0d" stroke-width="1.42" stroke-linejoin="round" />
<polygon points="300.0,458.7 330.4,458.7 334.5,482.1 305.2,482.1" fill="#808188" stroke="#0c0c0d" stroke-width="1.42" stroke-linejoin="round" />
<path d="M331.6 435.2 Q341 436 342.7 445.8 L343.3 466.9 Q346 471 346.2 475 Q345 481 341.6 482.1 L334.5 482.1 L330.4 458.7 L329.8 449.3 Z" fill="#8c8d94" stroke="#0c0c0d" stroke-width="1.42" stroke-linejoin="round" stroke-linecap="round" />
<path d="M329.8 449.3 Q338 449 342.9 454.6" fill="none" stroke="#0c0c0d" stroke-width="1.05" stroke-linejoin="round" stroke-linecap="round" />
<path d="M330.4 458.7 Q338 460.4 343 455.4" fill="none" stroke="#0c0c0d" stroke-width="1.05" stroke-linejoin="round" stroke-linecap="round" />
<path d="M332.4 470.6 Q340 470 345.4 464.8" fill="none" stroke="#0c0c0d" stroke-width="1.05" stroke-linejoin="round" stroke-linecap="round" />
<ellipse cx="319.9" cy="458.2" rx="2.1" ry="2.1" transform="rotate(0 319.9 458.2)" fill="#888990" stroke="#0c0c0d" stroke-width="1.05" />
<polygon points="318.4,469.6 321.6,469.6 321.0,482.0 317.6,482.0" fill="#9a9ba2" stroke="#0c0c0d" stroke-width="0.95" stroke-linejoin="round" />
<polygon points="343.3,447.5 357.4,447.5 357.4,466.3 343.3,466.3" fill="#a0a1a8" stroke="#0c0c0d" stroke-width="1.42" stroke-linejoin="round" />
<ellipse cx="358.8" cy="456.9" rx="1.8" ry="9.4" transform="rotate(0 358.8 456.9)" fill="#6c6d74" stroke="#0c0c0d" stroke-width="1.42" />
<polygon points="367.9,435.2 444.0,434.6 444.0,449.3 360.9,451.6" fill="#75767d" stroke="#0c0c0d" stroke-width="1.42" stroke-linejoin="round" />
<polygon points="360.9,451.6 444.0,449.3 444.0,472.7 365.9,474.7 361.5,471.6" fill="#94949a" stroke="#0c0c0d" stroke-width="1.42" stroke-linejoin="round" />
<polygon points="365.9,474.7 444.0,472.7 444.0,478.8 370.9,480.9 361.5,471.6" fill="#5e5f66" stroke="#0c0c0d" stroke-width="1.42" stroke-linejoin="round" />
<polyline points="366.8,435.6 366.6,474.6" fill="none" stroke="#0c0c0d" stroke-width="1.05" stroke-linecap="round" stroke-linejoin="round" />
<path d="M467 417.4 Q451 420 445.6 434.6 Q443.4 449 444.2 476 Q446 483 453 487.4 L467 494.5 Z" fill="url(#gDome)" stroke="#0c0c0d" stroke-width="1.42" stroke-linejoin="round" stroke-linecap="round" />
<path d="M456.6 421.4 Q453.4 452 456.2 489" fill="none" stroke="#0c0c0d" stroke-width="1.05" stroke-linejoin="round" stroke-linecap="round" />
<polygon points="469.0,415.8 529.0,415.0 529.0,420.3 468.0,421.0" fill="#55565d" stroke="#0c0c0d" stroke-width="1.42" stroke-linejoin="round" />
<polygon points="468.0,421.0 529.0,420.3 529.0,431.0 466.6,432.0" fill="#75767d" stroke="#0c0c0d" stroke-width="1.42" stroke-linejoin="round" />
<polygon points="466.6,432.0 529.0,431.0 529.0,494.0 467.0,494.5" fill="#94949a" stroke="#0c0c0d" stroke-width="1.42" stroke-linejoin="round" />
<polygon points="470.4,450.3 523.4,449.8 523.6,481.0 470.6,481.5" fill="#2b2b2e" stroke="#0c0c0d" stroke-width="1.42" stroke-linejoin="round" />
<polygon points="471.4,457.0 521.2,456.6 521.2,474.5 471.4,475.0" fill="#888990" stroke="#0c0c0d" stroke-width="0" stroke-linejoin="round" />
<polygon points="471.4,457.0 521.2,456.6 521.4,479.6 471.6,480.0" fill="none" stroke="#1f8aa5" stroke-width="1.2" stroke-linejoin="round" />
<ellipse cx="479.8" cy="467.2" rx="4.9" ry="5.3" transform="rotate(0 479.8 467.2)" fill="#1b1b1d" stroke="#0c0c0d" stroke-width="0" />
<ellipse cx="480.1" cy="464.6" rx="3.1" ry="2.2" transform="rotate(0 480.1 464.6)" fill="#3a3a3d" stroke="#0c0c0d" stroke-width="0" />
<ellipse cx="490.7" cy="467.2" rx="4.9" ry="5.3" transform="rotate(0 490.7 467.2)" fill="#1b1b1d" stroke="#0c0c0d" stroke-width="0" />
<ellipse cx="491.0" cy="464.6" rx="3.1" ry="2.2" transform="rotate(0 491.0 464.6)" fill="#3a3a3d" stroke="#0c0c0d" stroke-width="0" />
<ellipse cx="501.6" cy="467.2" rx="4.9" ry="5.3" transform="rotate(0 501.6 467.2)" fill="#1b1b1d" stroke="#0c0c0d" stroke-width="0" />
<ellipse cx="501.9" cy="464.6" rx="3.1" ry="2.2" transform="rotate(0 501.9 464.6)" fill="#3a3a3d" stroke="#0c0c0d" stroke-width="0" />
<ellipse cx="514.8" cy="467.2" rx="4.9" ry="5.3" transform="rotate(0 514.8 467.2)" fill="#1b1b1d" stroke="#0c0c0d" stroke-width="0" />
<ellipse cx="515.1" cy="464.6" rx="3.1" ry="2.2" transform="rotate(0 515.1 464.6)" fill="#3a3a3d" stroke="#0c0c0d" stroke-width="0" />
<polygon points="529.0,432.7 534.8,432.7 534.8,455.0 529.0,455.0" fill="#7d7e85" stroke="#0c0c0d" stroke-width="1.42" stroke-linejoin="round" />
<polyline points="529.0,446.0 534.8,446.0" fill="none" stroke="#0c0c0d" stroke-width="1.05" stroke-linecap="round" stroke-linejoin="round" />
<polygon points="529.7,479.7 539.0,479.7 539.0,494.5 529.7,494.5" fill="#888990" stroke="#0c0c0d" stroke-width="1.42" stroke-linejoin="round" />
<path d="M534 443.2 L693 440.6" fill="none" stroke="#0c0c0d" stroke-width="9.5" stroke-linejoin="round" stroke-linecap="round" style="stroke-linecap:butt"/>
<path d="M534 443.2 L693 440.6" fill="none" stroke="#6c6d74" stroke-width="7.5" stroke-linejoin="round" stroke-linecap="round" style="stroke-linecap:butt"/>
<path d="M534 443.2 L693 440.6" fill="none" stroke="#9899a0" stroke-width="5.25" stroke-linejoin="round" stroke-linecap="round" transform="translate(-0.38 -0.67)" filter="url(#soft)" style="stroke-linecap:butt"/>
<path d="M534 443.2 L693 440.6" fill="none" stroke="#abacb3" stroke-width="1.9500000000000002" stroke-linejoin="round" stroke-linecap="round" transform="translate(-0.75 -1.50)" filter="url(#soft)" style="stroke-linecap:butt"/>
<polygon points="698.0,435.4 769.5,424.2 769.5,435.2 699.0,444.2" fill="#77787f" stroke="#0c0c0d" stroke-width="1.42" stroke-linejoin="round" />
<polygon points="698.0,435.8 769.5,424.8 769.5,431.6 698.6,441.4" fill="#a0a1a8" stroke="#0c0c0d" stroke-width="0" stroke-linejoin="round" />
<polygon points="698.0,436.6 769.5,425.8 769.5,428.2 698.2,438.8" fill="#b4b5bc" stroke="#0c0c0d" stroke-width="0" stroke-linejoin="round" />
<polygon points="692.5,432.6 697.6,432.2 699.2,446.2 694.0,446.6" fill="#9c9da4" stroke="#0c0c0d" stroke-width="1.42" stroke-linejoin="round" />
<polygon points="711.5,416.6 722.0,416.0 724.2,430.6 713.6,431.4" fill="#909198" stroke="#0c0c0d" stroke-width="1.42" stroke-linejoin="round" />
<polygon points="711.5,416.6 709.0,418.0 711.0,432.4 713.6,431.4" fill="#4c4c50" stroke="#0c0c0d" stroke-width="0.95" stroke-linejoin="round" />
<polygon points="769.3,423.4 775.2,422.6 776.0,436.4 770.0,437.0" fill="#9a9ba2" stroke="#0c0c0d" stroke-width="1.42" stroke-linejoin="round" />
<polygon points="774.0,420.6 778.8,417.6 789.4,413.4 792.8,425.2 790.4,433.4 780.4,436.9 775.2,425.2" fill="#7c7d84" stroke="#0c0c0d" stroke-width="1.42" stroke-linejoin="round" />
<polyline points="778.8,417.6 781.4,436.2" fill="none" stroke="#0c0c0d" stroke-width="1.05" stroke-linecap="round" stroke-linejoin="round" />
<polyline points="775.2,425.2 792.8,425.2" fill="none" stroke="#0c0c0d" stroke-width="1.05" stroke-linecap="round" stroke-linejoin="round" />
<polyline points="777.6,431.6 791.4,430.6" fill="none" stroke="#0c0c0d" stroke-width="1.05" stroke-linecap="round" stroke-linejoin="round" />
<path d="M774.6 420 Q772.6 428 779.6 437.4" fill="none" stroke="#0c0c0d" stroke-width="2.2" stroke-linejoin="round" stroke-linecap="round" />
<path d="M792.2 411.7 L796.3 409.3 L809.1 409.3 L813.8 415.2 L815 425.2 L812.7 436.9 L808 442.2 L796.3 441 L791.6 434.5 Q789.4 424 792.2 411.7 Z" fill="#808188" stroke="#0c0c0d" stroke-width="1.42" stroke-linejoin="round" stroke-linecap="round" />
<path d="M796.6 420.8 L814.6 421.2 L814.6 427.4 L797 427.6 Q794.6 424 796.6 420.8 Z" fill="#9c9da4" stroke="#0c0c0d" stroke-width="1.05" stroke-linejoin="round" stroke-linecap="round" />
<path d="M796.3 409.3 Q792.4 420 797 427.6 Q798.6 436 796.3 441" fill="none" stroke="#0c0c0d" stroke-width="1.05" stroke-linejoin="round" stroke-linecap="round" />
<polyline points="809.1,409.3 811.4,421.0" fill="none" stroke="#0c0c0d" stroke-width="1.05" stroke-linecap="round" stroke-linejoin="round" />
<polyline points="811.2,427.6 808.0,442.2" fill="none" stroke="#0c0c0d" stroke-width="1.05" stroke-linecap="round" stroke-linejoin="round" />
<path d="M492.4 482 L492.8 511" fill="none" stroke="#0c0c0d" stroke-width="9.6" stroke-linejoin="round" stroke-linecap="round" style="stroke-linecap:butt"/>
<path d="M492.4 482 L492.8 511" fill="none" stroke="#6c6d74" stroke-width="7.6" stroke-linejoin="round" stroke-linecap="round" style="stroke-linecap:butt"/>
<path d="M492.4 482 L492.8 511" fill="none" stroke="#9899a0" stroke-width="5.319999999999999" stroke-linejoin="round" stroke-linecap="round" transform="translate(-0.38 -0.68)" filter="url(#soft)" style="stroke-linecap:butt"/>
<path d="M492.4 482 L492.8 511" fill="none" stroke="#abacb3" stroke-width="1.976" stroke-linejoin="round" stroke-linecap="round" transform="translate(-0.76 -1.52)" filter="url(#soft)" style="stroke-linecap:butt"/>
<path d="M515.4 485 L515.6 511" fill="none" stroke="#0c0c0d" stroke-width="9.6" stroke-linejoin="round" stroke-linecap="round" style="stroke-linecap:butt"/>
<path d="M515.4 485 L515.6 511" fill="none" stroke="#6c6d74" stroke-width="7.6" stroke-linejoin="round" stroke-linecap="round" style="stroke-linecap:butt"/>
<path d="M515.4 485 L515.6 511" fill="none" stroke="#9899a0" stroke-width="5.319999999999999" stroke-linejoin="round" stroke-linecap="round" transform="translate(-0.38 -0.68)" filter="url(#soft)" style="stroke-linecap:butt"/>
<path d="M515.4 485 L515.6 511" fill="none" stroke="#abacb3" stroke-width="1.976" stroke-linejoin="round" stroke-linecap="round" transform="translate(-0.76 -1.52)" filter="url(#soft)" style="stroke-linecap:butt"/>
<ellipse cx="492.6" cy="530.6" rx="3.8" ry="2.6" transform="rotate(0 492.6 530.6)" fill="#a2a3aa" stroke="#0c0c0d" stroke-width="1.05" />
<ellipse cx="515.6" cy="530.4" rx="3.8" ry="2.6" transform="rotate(0 515.6 530.4)" fill="#a2a3aa" stroke="#0c0c0d" stroke-width="1.05" />
<path d="M588.6 520 L588 541.5" fill="none" stroke="#0c0c0d" stroke-width="15.6" stroke-linejoin="round" stroke-linecap="round" style="stroke-linecap:round"/>
<path d="M588.6 520 L588 541.5" fill="none" stroke="#6c6d74" stroke-width="13.6" stroke-linejoin="round" stroke-linecap="round" style="stroke-linecap:round"/>
<path d="M588.6 520 L588 541.5" fill="none" stroke="#9899a0" stroke-width="9.52" stroke-linejoin="round" stroke-linecap="round" transform="translate(-0.68 -1.22)" filter="url(#soft)" style="stroke-linecap:round"/>
<path d="M588.6 520 L588 541.5" fill="none" stroke="#abacb3" stroke-width="3.536" stroke-linejoin="round" stroke-linecap="round" transform="translate(-1.36 -2.72)" filter="url(#soft)" style="stroke-linecap:round"/>
<path d="M524.4 462.6 L578 462 Q590.5 462 590 476 L588.6 524" fill="none" stroke="#0c0c0d" stroke-width="15.6" stroke-linejoin="round" stroke-linecap="round" style="stroke-linecap:butt"/>
<path d="M524.4 462.6 L578 462 Q590.5 462 590 476 L588.6 524" fill="none" stroke="#6c6d74" stroke-width="13.6" stroke-linejoin="round" stroke-linecap="round" style="stroke-linecap:butt"/>
<path d="M524.4 462.6 L578 462 Q590.5 462 590 476 L588.6 524" fill="none" stroke="#9899a0" stroke-width="9.52" stroke-linejoin="round" stroke-linecap="round" transform="translate(-0.68 -1.22)" filter="url(#soft)" style="stroke-linecap:butt"/>
<path d="M524.4 462.6 L578 462 Q590.5 462 590 476 L588.6 524" fill="none" stroke="#abacb3" stroke-width="3.536" stroke-linejoin="round" stroke-linecap="round" transform="translate(-1.36 -2.72)" filter="url(#soft)" style="stroke-linecap:butt"/>
<path d="M581.2 492.6 Q588 497 596 492.6" fill="none" stroke="#0c0c0d" stroke-width="2.4" stroke-linejoin="round" stroke-linecap="round" />
<path d="M285 490.6 L440 490 Q454 490 452.5 503 Q451.5 519.5 466 519.5 L572 520 Q590 520.5 592 531" fill="none" stroke="#0c0c0d" stroke-width="16.5" stroke-linejoin="round" stroke-linecap="round" style="stroke-linecap:butt"/>
<path d="M285 490.6 L440 490 Q454 490 452.5 503 Q451.5 519.5 466 519.5 L572 520 Q590 520.5 592 531" fill="none" stroke="#6c6d74" stroke-width="14.5" stroke-linejoin="round" stroke-linecap="round" style="stroke-linecap:butt"/>
<path d="M285 490.6 L440 490 Q454 490 452.5 503 Q451.5 519.5 466 519.5 L572 520 Q590 520.5 592 531" fill="none" stroke="#9899a0" stroke-width="10.149999999999999" stroke-linejoin="round" stroke-linecap="round" transform="translate(-0.73 -1.30)" filter="url(#soft)" style="stroke-linecap:butt"/>
<path d="M285 490.6 L440 490 Q454 490 452.5 503 Q451.5 519.5 466 519.5 L572 520 Q590 520.5 592 531" fill="none" stroke="#abacb3" stroke-width="3.77" stroke-linejoin="round" stroke-linecap="round" transform="translate(-1.45 -2.90)" filter="url(#soft)" style="stroke-linecap:butt"/>
<polyline points="433.0,483.0 433.0,497.5" fill="none" stroke="#0c0c0d" stroke-width="1.0" stroke-linecap="round" stroke-linejoin="round" />
<polyline points="555.5,512.6 555.5,527.6" fill="none" stroke="#0c0c0d" stroke-width="1.0" stroke-linecap="round" stroke-linejoin="round" />
<path d="M581 533 Q588 537 596.5 531.5" fill="none" stroke="#0c0c0d" stroke-width="1.2" stroke-linejoin="round" stroke-linecap="round" />
<polygon points="158.5,438.5 170.0,446.5 166.5,452.0 158.0,443.5" fill="#85868d" stroke="#0c0c0d" stroke-width="1.42" stroke-linejoin="round" />
<path d="M174 433.4 L213.8 431.8 Q229 432.6 238.6 443.2" fill="none" stroke="#0c0c0d" stroke-width="8.2" stroke-linejoin="round" stroke-linecap="round" style="stroke-linecap:butt"/>
<path d="M174 433.4 L213.8 431.8 Q229 432.6 238.6 443.2" fill="none" stroke="#6c6d74" stroke-width="6.2" stroke-linejoin="round" stroke-linecap="round" style="stroke-linecap:butt"/>
<path d="M174 433.4 L213.8 431.8 Q229 432.6 238.6 443.2" fill="none" stroke="#9899a0" stroke-width="4.34" stroke-linejoin="round" stroke-linecap="round" transform="translate(-0.31 -0.56)" filter="url(#soft)" style="stroke-linecap:butt"/>
<path d="M174 433.4 L213.8 431.8 Q229 432.6 238.6 443.2" fill="none" stroke="#abacb3" stroke-width="1.612" stroke-linejoin="round" stroke-linecap="round" transform="translate(-0.62 -1.24)" filter="url(#soft)" style="stroke-linecap:butt"/>
<path d="M170 440.4 L212 438.2 Q227.6 439 237 447.2" fill="none" stroke="#0c0c0d" stroke-width="8.2" stroke-linejoin="round" stroke-linecap="round" style="stroke-linecap:butt"/>
<path d="M170 440.4 L212 438.2 Q227.6 439 237 447.2" fill="none" stroke="#6c6d74" stroke-width="6.2" stroke-linejoin="round" stroke-linecap="round" style="stroke-linecap:butt"/>
<path d="M170 440.4 L212 438.2 Q227.6 439 237 447.2" fill="none" stroke="#9899a0" stroke-width="4.34" stroke-linejoin="round" stroke-linecap="round" transform="translate(-0.31 -0.56)" filter="url(#soft)" style="stroke-linecap:butt"/>
<path d="M170 440.4 L212 438.2 Q227.6 439 237 447.2" fill="none" stroke="#abacb3" stroke-width="1.612" stroke-linejoin="round" stroke-linecap="round" transform="translate(-0.62 -1.24)" filter="url(#soft)" style="stroke-linecap:butt"/>
<path d="M190.3 414.5 L198 419.3 L213.8 418.4 Q237 416.5 242.6 441.5" fill="none" stroke="#0c0c0d" stroke-width="9" stroke-linejoin="round" stroke-linecap="round" style="stroke-linecap:butt"/>
<path d="M190.3 414.5 L198 419.3 L213.8 418.4 Q237 416.5 242.6 441.5" fill="none" stroke="#6c6d74" stroke-width="7" stroke-linejoin="round" stroke-linecap="round" style="stroke-linecap:butt"/>
<path d="M190.3 414.5 L198 419.3 L213.8 418.4 Q237 416.5 242.6 441.5" fill="none" stroke="#9899a0" stroke-width="4.8999999999999995" stroke-linejoin="round" stroke-linecap="round" transform="translate(-0.35 -0.63)" filter="url(#soft)" style="stroke-linecap:butt"/>
<path d="M190.3 414.5 L198 419.3 L213.8 418.4 Q237 416.5 242.6 441.5" fill="none" stroke="#abacb3" stroke-width="1.82" stroke-linejoin="round" stroke-linecap="round" transform="translate(-0.70 -1.40)" filter="url(#soft)" style="stroke-linecap:butt"/>
<polyline points="195.6,422.6 199.6,415.8" fill="none" stroke="#0c0c0d" stroke-width="1" stroke-linecap="round" stroke-linejoin="round" />
<polyline points="238.6,441.6 246.4,440.4" fill="none" stroke="#0c0c0d" stroke-width="1.2" stroke-linecap="round" stroke-linejoin="round" />
<polyline points="238.4,444.2 246.4,443.0" fill="none" stroke="#0c0c0d" stroke-width="1.05" stroke-linecap="round" stroke-linejoin="round" />
<g transform="translate(149.7 435.6) rotate(-46.4)"><defs><linearGradient id="gCyl" x1="0" y1="0" x2="0" y2="1"><stop offset="0" stop-color="#686970"/><stop offset=".35" stop-color="#8c8d94"/><stop offset="1" stop-color="#505158"/></linearGradient></defs><ellipse cx="63.5" cy="0" rx="2.77" ry="6.6" fill="url(#gCyl)" stroke="#0c0c0d" stroke-width="1.42"/><rect x="51" y="-6.6" width="12.5" height="13.2" fill="url(#gCyl)"/><path d="M51 -6.6L63.5 -6.6M51 6.6L63.5 6.6" stroke="#0c0c0d" stroke-width="1.42"/><ellipse cx="51" cy="0" rx="2.77" ry="6.6" fill="#7e7f86" stroke="#0c0c0d" stroke-width="1"/><ellipse cx="47.5" cy="0" rx="5.21" ry="12.4" fill="url(#gCyl)" stroke="#0c0c0d" stroke-width="1.42"/><rect x="36" y="-12.4" width="11.5" height="24.8" fill="url(#gCyl)"/><path d="M36 -12.4L47.5 -12.4M36 12.4L47.5 12.4" stroke="#0c0c0d" stroke-width="1.42"/><ellipse cx="36" cy="0" rx="5.21" ry="12.4" fill="#84848a" stroke="#0c0c0d" stroke-width="1"/><ellipse cx="36.6" cy="0" rx="3.6" ry="8.6" fill="#6c6d74" stroke="#0c0c0d" stroke-width=".9"/><ellipse cx="36" cy="0" rx="2.44" ry="5.8" fill="#808188" stroke="#0c0c0d" stroke-width="1.42"/><rect x="27" y="-5.8" width="9" height="11.6" fill="#808188"/><path d="M27 -5.8L36 -5.8M27 5.8L36 5.8" stroke="#0c0c0d" stroke-width="1.42"/><ellipse cx="27" cy="0" rx="2.44" ry="5.8" fill="#909198" stroke="#0c0c0d" stroke-width="1"/><ellipse cx="24.5" cy="0" rx="5.21" ry="12.4" fill="url(#gCyl)" stroke="#0c0c0d" stroke-width="1.42"/><rect x="12.5" y="-12.4" width="12.0" height="24.8" fill="url(#gCyl)"/><path d="M12.5 -12.4L24.5 -12.4M12.5 12.4L24.5 12.4" stroke="#0c0c0d" stroke-width="1.42"/><ellipse cx="12.5" cy="0" rx="5.21" ry="12.4" fill="#84848a" stroke="#0c0c0d" stroke-width="1"/><ellipse cx="9.5" cy="0" rx="4.12" ry="9.8" fill="#1c1c1e" stroke="#0c0c0d" stroke-width="1.42"/><rect x="4" y="-9.8" width="5.5" height="19.6" fill="#1c1c1e"/><path d="M4 -9.8L9.5 -9.8M4 9.8L9.5 9.8" stroke="#0c0c0d" stroke-width="1.42"/><ellipse cx="4" cy="0" rx="4.12" ry="9.8" fill="#1c1c1e" stroke="#0c0c0d" stroke-width="1"/></g>
<clipPath id="cpBar"><polygon points="0,300 235.4,300 203,375.5 114.8,581 0,581"/></clipPath><g clip-path="url(#cpBar)">
<path d="M153.6 430.8 L150.5 434 Q143.5 441 144.3 455 Q145.5 470 153 479 L166 496" fill="none" stroke="#0c0c0d" stroke-width="18.2" stroke-linejoin="round" stroke-linecap="round" style="stroke-linecap:butt"/>
<path d="M153.6 430.8 L150.5 434 Q143.5 441 144.3 455 Q145.5 470 153 479 L166 496" fill="none" stroke="#707178" stroke-width="16" stroke-linejoin="round" stroke-linecap="round" style="stroke-linecap:butt"/>
<path d="M153.6 430.8 L150.5 434 Q143.5 441 144.3 455 Q145.5 470 153 479 L166 496" fill="none" stroke="#8b8c93" stroke-width="11" stroke-linejoin="round" stroke-linecap="round" transform="translate(-1.3 -0.6)" filter="url(#soft)" style="stroke-linecap:butt"/>
<path d="M153.6 430.8 L150.5 434 Q143.5 441 144.3 455 Q145.5 470 153 479 L166 496" fill="none" stroke="#9fa0a7" stroke-width="4.2" stroke-linejoin="round" stroke-linecap="round" transform="translate(-2.8 -1.2)" filter="url(#soft)" style="stroke-linecap:butt"/>
</g>
<polygon points="391.0,532.5 445.0,531.5 445.0,559.0 408.0,559.5 397.0,554.0 391.0,545.0" fill="#888990" stroke="#0c0c0d" stroke-width="1.42" stroke-linejoin="round" />
<polygon points="419.0,535.0 443.6,534.2 443.6,547.8 418.4,547.8" fill="#e2e9f2" stroke="#0c0c0d" stroke-width="1.05" stroke-linejoin="round" />
<polyline points="408.4,552.6 445.0,552.2" fill="none" stroke="#0c0c0d" stroke-width="1.05" stroke-linecap="round" stroke-linejoin="round" />
<polyline points="408.4,532.4 408.6,559.4" fill="none" stroke="#0c0c0d" stroke-width="1.05" stroke-linecap="round" stroke-linejoin="round" />
<path d="M391.5 537 Q394 552 408 556" fill="none" stroke="#0c0c0d" stroke-width="1.05" stroke-linejoin="round" stroke-linecap="round" />
<polyline points="409.0,501.0 445.0,509.0" fill="none" stroke="#0c0c0d" stroke-width="3" stroke-linecap="round" stroke-linejoin="round" />
<polyline points="409.0,501.0 445.0,509.0" fill="none" stroke="#97989f" stroke-width="1.4" stroke-linecap="round" stroke-linejoin="round" />
<polygon points="408.3,461.1 409.9,471.2 409.0,513.4 404.4,503.0" fill="#3c3c40" stroke="#0c0c0d" stroke-width="0.95" stroke-linejoin="round" />
<polygon points="398.9,461.9 408.3,461.1 405.2,485.3 403.6,502.5 406.7,530.6 398.1,531.4 395.0,502.5" fill="#888990" stroke="#0c0c0d" stroke-width="1.42" stroke-linejoin="round" />
<polyline points="406.6,479.0 405.6,497.6" fill="none" stroke="#1f8aa5" stroke-width="1.5" stroke-linecap="round" stroke-linejoin="round" />
<polygon points="340.0,502.8 395.0,502.2 395.6,508.0 346.0,508.6" fill="#86878e" stroke="#0c0c0d" stroke-width="1.05" stroke-linejoin="round" />
<polygon points="222.0,582.3 222.2,578.0 222.9,573.8 224.3,569.7 241.5,522.8 243.2,519.1 245.5,515.5 248.3,512.2 251.6,509.0 255.2,506.0 259.4,503.3 263.9,500.8 268.7,498.7 273.9,496.8 279.4,495.2 285.1,494.0 291.0,493.1 297.0,492.6 303.1,492.4 309.3,492.6 315.6,493.1 321.7,494.0 327.8,495.2 333.8,496.7 339.5,498.6 345.1,500.7 350.4,503.1 355.4,505.9 360.0,508.8 364.3,512.0 368.1,515.4 371.5,518.9 374.5,522.6 377.0,526.5 378.9,530.4 380.4,534.4 381.3,538.4 381.7,542.4 381.5,546.4 374.8,595.0 374.1,599.2 372.7,603.3 370.8,607.3 368.4,611.2 365.4,614.8 361.9,618.3 357.9,621.5 353.5,624.4 348.6,627.0 343.4,629.3 337.8,631.4 332.0,633.0 325.8,634.3 319.5,635.3 313.0,635.8 306.4,636.0 299.7,635.9 293.1,635.3 286.4,634.4 279.9,633.1 273.5,631.4 267.3,629.5 261.3,627.1 255.6,624.5 250.3,621.6 245.3,618.4 240.7,615.0 236.5,611.4 232.9,607.5 229.7,603.5 227.0,599.4 224.9,595.2 223.4,590.9 222.4,586.6" fill="url(#gTireA)" stroke="#0c0c0d" stroke-width="1.42" stroke-linejoin="round" />
<ellipse cx="298.5" cy="586.5" rx="76.8" ry="49.1" transform="rotate(6.35 298.5 586.5)" fill="#919299" stroke="#0c0c0d" stroke-width="1.42" />
<ellipse cx="298.7" cy="586.2" rx="74.1" ry="46.9" transform="rotate(6.35 298.7 586.2)" fill="#8b8c93" stroke="#0c0c0d" stroke-width="1.05" />
<ellipse cx="298.7" cy="585.9" rx="61.4" ry="37.6" transform="rotate(6.35 298.7 585.9)" fill="url(#gDishL)" stroke="#0c0c0d" stroke-width="1.42" />
<clipPath id="cpA"><ellipse cx="301.1" cy="580.9" rx="57.1" ry="32.3" transform="rotate(6.35 301.1 580.9)"/></clipPath>
<ellipse cx="301.1" cy="580.9" rx="57.1" ry="32.3" transform="rotate(6.35 301.1 580.9)" fill="url(#gBackL)" stroke="#0c0c0d" stroke-width="1.05" />
<g clip-path="url(#cpA)">
<polygon points="231.2,517.6 381.2,517.6 381.2,565.6 305.2,571.6 231.2,557.6" fill="#888990" stroke="#0c0c0d" stroke-width="0" stroke-linejoin="round" />
<polygon points="274.2,561.6 288.2,558.6 296.2,567.6 283.2,568.6" fill="#e7edf5" stroke="#0c0c0d" stroke-width="0.95" stroke-linejoin="round" />
<polygon points="311.2,569.6 324.2,569.0 322.2,575.0 312.2,575.0" fill="#e7edf5" stroke="#0c0c0d" stroke-width="0.95" stroke-linejoin="round" />
<path d="M295.2 575.6 L270.2 588.6 L273.2 592.6 Q289.2 601.6 305.2 603.6 L309.2 595.6 L310.2 580.6 Z" fill="#686970" stroke="#0c0c0d" stroke-width="1.05" stroke-linejoin="round" stroke-linecap="round" />
<polygon points="302.6,575.0 235.5,536.9 231.1,545.0 299.8,580.2" fill="#8f9097" stroke="#0c0c0d" stroke-width="1.05" stroke-linejoin="round" />
<polygon points="304.6,577.0 296.9,521.2 286.7,523.0 297.8,578.2" fill="#97989f" stroke="#0c0c0d" stroke-width="1.05" stroke-linejoin="round" />
<polygon points="302.7,579.7 361.4,538.1 356.7,531.6 299.7,575.5" fill="#8f9097" stroke="#0c0c0d" stroke-width="1.05" stroke-linejoin="round" />
<polygon points="301.4,581.2 391.0,576.8 390.4,566.8 301.0,574.0" fill="#97989f" stroke="#0c0c0d" stroke-width="1.05" stroke-linejoin="round" /><polyline points="301.2,578.3 390.7,572.3" fill="none" stroke="#0c0c0d" stroke-width="0.95" stroke-linecap="round" stroke-linejoin="round" />
<polygon points="300.4,574.7 270.9,581.8 273.0,589.5 302.0,580.5" fill="#909198" stroke="#0c0c0d" stroke-width="1.05" stroke-linejoin="round" />
<polygon points="297.3,578.5 300.7,597.1 310.1,595.0 305.1,576.7" fill="#888990" stroke="#0c0c0d" stroke-width="1.05" stroke-linejoin="round" />
</g>
<ellipse cx="302.8" cy="563.0" rx="10.4" ry="3.8" transform="rotate(3 302.8 563.0)" fill="#97989f" stroke="#0c0c0d" stroke-width="1.05" />
<polygon points="292.4,563.2 313.2,563.6 310.6,574.6 293.8,574.0" fill="#909198" stroke="#0c0c0d" stroke-width="0" stroke-linejoin="round" />
<polyline points="292.4,563.2 293.8,574.0" fill="none" stroke="#0c0c0d" stroke-width="1.05" stroke-linecap="round" stroke-linejoin="round" />
<polyline points="313.2,563.6 310.6,574.6" fill="none" stroke="#0c0c0d" stroke-width="1.05" stroke-linecap="round" stroke-linejoin="round" />
<polygon points="294.2,576.0 297.6,571.8 305.2,571.6 309.0,575.6 305.4,581.2 297.8,581.6" fill="#9c9da4" stroke="#0c0c0d" stroke-width="1.42" stroke-linejoin="round" />
<polygon points="294.2,576.0 297.8,581.6 305.4,581.2 309.0,575.6 308.6,578.6 305.2,583.6 297.6,584.0 294.4,578.8" fill="#707178" stroke="#0c0c0d" stroke-width="1.05" stroke-linejoin="round" />
<ellipse cx="301.6" cy="576.6" rx="1.7" ry="1.4" transform="rotate(0 301.6 576.6)" fill="#5a5b62" stroke="#0c0c0d" stroke-width="1.05" />
<polygon points="787.5,505.0 788.5,498.5 815.0,487.0 855.0,486.0 863.8,493.8 840.0,500.0 800.0,510.0" fill="#888990" stroke="#0c0c0d" stroke-width="1.42" stroke-linejoin="round" />
<polyline points="788.5,498.5 815.5,491.5 815.0,487.0" fill="none" stroke="#0c0c0d" stroke-width="1.05" stroke-linecap="round" stroke-linejoin="round" />
<polyline points="815.5,491.5 858.0,490.0" fill="none" stroke="#0c0c0d" stroke-width="1.05" stroke-linecap="round" stroke-linejoin="round" />
<polyline points="825.5,487.0 826.5,491.2" fill="none" stroke="#0c0c0d" stroke-width="1.05" stroke-linecap="round" stroke-linejoin="round" />
<polyline points="845.5,486.4 846.5,490.6" fill="none" stroke="#0c0c0d" stroke-width="1.05" stroke-linecap="round" stroke-linejoin="round" />
<polyline points="798.0,436.0 815.4,481.0 817.4,487.0" fill="none" stroke="#0c0c0d" stroke-width="4.6" stroke-linecap="round" stroke-linejoin="round" />
<polyline points="798.0,436.0 815.4,481.0 817.4,487.0" fill="none" stroke="#808188" stroke-width="2.8" stroke-linecap="round" stroke-linejoin="round" />
<polyline points="811.0,473.0 814.0,480.6" fill="none" stroke="#0c0c0d" stroke-width="5.6" stroke-linecap="round" stroke-linejoin="round" />
<polyline points="811.2,473.6 813.8,480.0" fill="none" stroke="#8d8e95" stroke-width="3.8" stroke-linecap="round" stroke-linejoin="round" />
<polyline points="789.4,407.0 794.4,413.0" fill="none" stroke="#0c0c0d" stroke-width="4.4" stroke-linecap="round" stroke-linejoin="round" />
<polyline points="789.4,407.0 794.4,413.0" fill="none" stroke="#888990" stroke-width="2.6" stroke-linecap="round" stroke-linejoin="round" />
<polygon points="767.0,547.4 767.4,543.0 768.4,538.6 770.0,534.3 772.1,530.1 774.8,525.9 778.0,521.9 781.7,518.0 785.9,514.4 790.5,510.9 795.6,507.7 801.0,504.8 806.7,502.1 812.7,499.8 819.0,497.8 825.5,496.1 832.1,494.8 838.8,493.9 845.5,493.4 852.2,493.2 858.9,493.4 865.4,494.0 871.8,494.9 878.0,496.2 883.9,497.9 889.5,500.0 894.8,502.3 899.7,505.0 904.2,508.0 908.2,511.2 911.7,514.7 914.7,518.4 917.2,522.2 919.1,526.3 920.5,530.4 928.5,563.4 929.2,567.7 929.4,572.0 929.0,576.4 928.0,580.8 926.5,585.1 924.3,589.3 921.6,593.5 918.4,597.5 914.7,601.4 910.5,605.0 905.9,608.5 900.8,611.7 895.4,614.6 889.7,617.3 883.7,619.6 877.4,621.6 870.9,623.3 864.3,624.6 857.6,625.5 850.9,626.0 844.2,626.2 837.5,626.0 831.0,625.4 824.6,624.5 818.4,623.1 812.5,621.5 806.9,619.4 801.6,617.1 796.7,614.4 792.2,611.4 788.2,608.2 784.7,604.7 781.7,601.0 779.2,597.2 777.3,593.1 775.9,589.0 767.9,556.0 767.2,551.7" fill="url(#gTireD)" stroke="#0c0c0d" stroke-width="1.42" stroke-linejoin="round" />
<ellipse cx="852.2" cy="576.2" rx="77.5" ry="49.6" transform="rotate(-6.3 852.2 576.2)" fill="#919299" stroke="#0c0c0d" stroke-width="1.42" />
<ellipse cx="852.4" cy="575.9" rx="74.8" ry="47.4" transform="rotate(-6.3 852.4 575.9)" fill="#8b8c93" stroke="#0c0c0d" stroke-width="1.05" />
<ellipse cx="852.4" cy="575.6" rx="62.0" ry="37.9" transform="rotate(-6.3 852.4 575.6)" fill="url(#gDishR)" stroke="#0c0c0d" stroke-width="1.42" />
<clipPath id="cpD"><ellipse cx="853.0" cy="572.4" rx="59.8" ry="34.1" transform="rotate(-6.3 853.0 572.4)"/></clipPath>
<ellipse cx="853.0" cy="572.4" rx="59.8" ry="34.1" transform="rotate(-6.3 853.0 572.4)" fill="url(#gBackR)" stroke="#0c0c0d" stroke-width="1.05" />
<g clip-path="url(#cpD)">
<polygon points="780.4,517.4 930.4,517.4 930.4,569.4 860.4,573.4 780.4,547.4" fill="#86878e" stroke="#0c0c0d" stroke-width="0" stroke-linejoin="round" />
<polygon points="824.4,579.9 840.4,574.9 844.4,579.4 830.4,582.4" fill="#e7edf5" stroke="#0c0c0d" stroke-width="0.95" stroke-linejoin="round" />
<polygon points="880.4,543.8 888.4,541.4 886.0,546.8" fill="#e7edf5" stroke="#0c0c0d" stroke-width="0.95" stroke-linejoin="round" />
<polygon points="802.4,551.4 810.4,550.4 809.4,562.4 803.4,563.4" fill="#3e3e42" stroke="#0c0c0d" stroke-width="0.95" stroke-linejoin="round" />
<path d="M845.4 580.4 L831.4 601.4 Q853.4 607.4 873.4 595.4 L858.4 581.4 Z" fill="#5c5d64" stroke="#0c0c0d" stroke-width="1.05" stroke-linejoin="round" stroke-linecap="round" />
<polygon points="850.9,574.2 763.3,560.9 762.1,568.8 849.9,580.6" fill="#97989f" stroke="#0c0c0d" stroke-width="1.05" stroke-linejoin="round" /><polyline points="850.5,576.8 762.8,564.5" fill="none" stroke="#0c0c0d" stroke-width="0.95" stroke-linecap="round" stroke-linejoin="round" />
<polygon points="851.4,576.2 798.9,530.6 796.1,533.9 849.4,578.6" fill="#8f9097" stroke="#0c0c0d" stroke-width="1.05" stroke-linejoin="round" />
<polygon points="852.1,577.9 868.5,523.2 863.5,521.7 848.7,576.9" fill="#92939a" stroke="#0c0c0d" stroke-width="1.05" stroke-linejoin="round" />
<polygon points="851.6,580.6 929.4,553.5 925.7,543.8 849.2,574.2" fill="#9a9ba2" stroke="#0c0c0d" stroke-width="1.05" stroke-linejoin="round" /><polyline points="850.6,578.0 927.7,549.1" fill="none" stroke="#0c0c0d" stroke-width="0.95" stroke-linecap="round" stroke-linejoin="round" />
<polygon points="850.5,578.8 877.4,577.3 877.2,574.5 850.3,576.0" fill="#85868d" stroke="#0c0c0d" stroke-width="1.05" stroke-linejoin="round" />
<polygon points="848.7,575.7 833.8,590.2 838.1,594.4 852.1,579.1" fill="#8c8d94" stroke="#0c0c0d" stroke-width="1.05" stroke-linejoin="round" />
<polygon points="849.2,579.5 868.6,591.4 871.6,586.2 851.6,575.3" fill="#85868d" stroke="#0c0c0d" stroke-width="1.05" stroke-linejoin="round" />
</g>
<ellipse cx="851.2" cy="570.0" rx="10.6" ry="5.6" transform="rotate(-8 851.2 570.0)" fill="#8d8e95" stroke="#0c0c0d" stroke-width="1.42" />
<polygon points="840.8,570.2 861.6,568.8 859.8,575.9 841.8,576.9" fill="#8d8e95" stroke="#0c0c0d" stroke-width="0" stroke-linejoin="round" />
<polyline points="840.7,570.4 841.8,576.9" fill="none" stroke="#0c0c0d" stroke-width="1.05" stroke-linecap="round" stroke-linejoin="round" />
<polyline points="861.7,569.0 859.8,575.9" fill="none" stroke="#0c0c0d" stroke-width="1.05" stroke-linecap="round" stroke-linejoin="round" />
<polygon points="841.6,576.4 845.8,571.4 854.8,570.6 859.0,575.2 855.0,581.6 845.8,582.4" fill="#9c9da4" stroke="#0c0c0d" stroke-width="1.42" stroke-linejoin="round" />
<polygon points="841.6,576.4 845.8,582.4 855.0,581.6 859.0,575.2 858.6,577.8 854.8,584.0 845.6,584.8 841.8,579.0" fill="#707178" stroke="#0c0c0d" stroke-width="1.05" stroke-linejoin="round" />
<ellipse cx="850.6" cy="576.8" rx="3.2" ry="2.3" transform="rotate(-8 850.6 576.8)" fill="#b2b3ba" stroke="#0c0c0d" stroke-width="1.05" />
</svg>
<svg width="1024" height="768" viewBox="0 0 1024 768"><g mask="url(#gm)" opacity=".55"><use href="#gl"/></g></svg>
<svg width="1024" height="768" viewBox="0 0 1024 768" style="pointer-events:none">
<defs><clipPath id="cf"><polygon points="952.7,40 1002.7,39.2 996.8,71.7 959.3,70.8"/></clipPath></defs>
<polygon points="960.3,21 995.8,20.4 1002.7,39.2 952.7,40" fill="#e9ebf0"/>
<polygon points="952.7,40 1002.7,39.2 996.8,71.7 959.3,70.8" fill="#fdfdfe"/>
<g clip-path="url(#cf)"><text transform="translate(973.4 44.800) rotate(90) scale(.74 1)" font-family='"Liberation Sans", sans-serif' font-size="12.4" font-weight="bold" fill="#505054">Bottom</text></g>
<text transform="translate(969.200 30.200) skewX(-20) scale(1.08 .52)" font-family='"Liberation Sans", sans-serif' font-size="9" font-weight="bold" fill="#3c3c40">Left</text>
<g stroke="#2a2a2c" stroke-width=".9"><path d="M969.6 92.8l-.6 7.200M972.800 92.800l-.6 7.200M967.800 95h6.600M967.400 98h6.600"/></g>
</svg>
<div id="mm">1 mm</div>
<div class="btn " style="left:11px;top:11px"><svg width="38" height="30" viewBox="0 0 38 30"><g fill="none" stroke="#4a4a4c" stroke-width="1.5"><rect x="12.2" y="10" width="5.6" height="4" rx="1.2"/><rect x="20.2" y="10" width="5.6" height="4" rx="1.2"/><rect x="12.2" y="16.6" width="5.6" height="4" rx="1.2"/><rect x="20.2" y="16.6" width="5.6" height="4" rx="1.2"/></g></svg></div><div class="btn " style="left:57px;top:11px"><svg width="38" height="30" viewBox="0 0 38 30"><circle cx="19" cy="15.2" r="8.6" fill="none" stroke="#4a4a4c" stroke-width="1.4"/><text x="19" y="19.6" font-family='"Liberation Sans", sans-serif' font-size="12.5" font-weight="bold" text-anchor="middle" fill="#4a4a4c">?</text></svg></div><div class="btn " style="left:102px;top:11px"><svg width="38" height="30" viewBox="0 0 38 30"><g fill="none" stroke="#4a4a4c" stroke-width="1.5" stroke-linecap="round" stroke-linejoin="round"><path d="M12.3 14.8v5.2h13.4v-5.2"/><path d="M19 7.5v7"/></g><path d="M15.8 12.2h6.4L19 16.2z" fill="#4a4a4c"/></svg></div><div class="btn " style="left:148px;top:11px"><svg width="38" height="30" viewBox="0 0 38 30"><g fill="none" stroke="#4a4a4c" stroke-width="1.5" stroke-linecap="round" stroke-linejoin="round"><path d="M12.3 14.8v5.2h13.4v-5.2"/><path d="M19 9.5v7.2"/></g><path d="M15.8 11h6.4L19 7z" fill="#4a4a4c"/></svg></div>
<div id="badge">3</div>
<div id="pill"><div class="t">Unlock all features</div><div id="gopro">Go Pro</div></div>
<div class="circ " style="top:261px"><svg width="42" height="42" viewBox="0 0 42 42"><path d="M12.300 29.500L14.800 19.200L23.900 10.100M17.600 20.400L26.100 12M22 23.300L29.500 15.400M12.300 29.500L22.600 27.300L31.700 17.300M14.800 19.200L17.600 20.400L18.900 23.300L22 23.300L22.600 27.300" fill="none" stroke="#414143" stroke-width="1.35" stroke-linejoin="round" stroke-linecap="round"/></svg></div><div class="lbl " style="top:274.5px">Sketch</div><div class="circ " style="top:312px"><svg width="42" height="42" viewBox="0 0 42 42"><path d="M21 12.4v17.2M12.4 21h17.2" stroke="#4a4a4c" stroke-width="1.4" stroke-linecap="round"/></svg></div><div class="lbl " style="top:325.5px">Add</div><div class="circ " style="top:363px"><svg width="42" height="42" viewBox="0 0 42 42"><path d="M21.060 22V12M17.300 17.300L21.060 12L24.800 17.300M21.060 22L13.100 27.600M15.400 21.400L13.100 27.600L19.500 27.600M21.060 22L29.500 27.600M27 21.400L29.500 27.600L22.900 27.600" fill="none" stroke="#4c4c4e" stroke-width="1.45" stroke-linejoin="round" stroke-linecap="round"/></svg></div><div class="lbl " style="top:376.5px">Transform</div><div class="circ " style="top:414px"><svg width="42" height="42" viewBox="0 0 42 42"><g fill="none" stroke="#4c4c4e" stroke-width="1.35" stroke-linejoin="round" stroke-linecap="round"><path d="M22.600 15.900L12 27.100a1.500 1.500 0 0 0 .1 2.100l.3.300a1.500 1.500 0 0 0 2.100-.1L25.100 18.200"/><path d="M18.600 15Q19.500 12.400 22.400 12.300Q25 12.400 27 14.800L29.500 15.700L31 17.300L27.600 21.400L25 18.200L22.600 15.900L19.200 16.300Q18.400 16 18.600 15Z"/></g></svg></div><div class="lbl " style="top:427.5px">Tools</div><div class="circ dis" style="top:466px"><svg width="42" height="42" viewBox="0 0 42 42"><g fill="none" stroke="#b9bec7" stroke-width="1.3" stroke-linecap="round" stroke-linejoin="round"><path d="M13.4 15.2h15.2M18 15v-1.800h6V15M14.800 15.400l.8 12.400c.1.900.7 1.400 1.500 1.400h7.800c.8 0 1.400-.5 1.500-1.400l.8-12.400"/><path d="M19 19v6.400M23 19v6.400"/></g></svg></div><div class="lbl dis" style="top:479.5px">Delete</div>
<div class="btn dis" style="left:11px;top:726.5px"><svg width="38" height="30" viewBox="0 0 38 30"><path d="M14 12.900h6.600a3.200 3.200 0 0 1 0 6.400h-2.400" fill="none" stroke="#b9bec7" stroke-width="1.9" stroke-linecap="round"/><path d="M16 9v7.800L10.200 12.900z" fill="#b9bec7"/></svg></div><div class="btn dis" style="left:57px;top:726.5px"><svg width="38" height="30" viewBox="0 0 38 30"><path d="M24 12.900h-6.600a3.200 3.200 0 0 0 0 6.400h2.400" fill="none" stroke="#b9bec7" stroke-width="1.9" stroke-linecap="round"/><path d="M22 9v7.800l5.800-3.900z" fill="#b9bec7"/></svg></div><div class="btn " style="left:110px;top:726.5px"><svg width="38" height="30" viewBox="0 0 38 30"><g fill="none" stroke="#4a4a4c" stroke-width="1.5" stroke-linejoin="round" stroke-linecap="round"><path d="M19 8.2l6.6 4.6-6.6 4.6-6.6-4.6z"/><path d="M12.4 17.2l6.6 4.6 6.6-4.6"/></g></svg></div>
<div class="btn " style="left:884px;top:726px"><svg width="38" height="30" viewBox="0 0 38 30"><g stroke="#4a4a4c" stroke-width="1.15" stroke-linejoin="round" fill="none"><path d="M10.3 10.6L17.2 6.4 27.2 10.600 23.900 12.600z" fill="#fff"/><path d="M23.9 12.6L27.200 10.600V21.200L23.900 23.200z" fill="#8c8c8e"/><path d="M10.300 10.600L23.900 12.600V23.200L10.300 21.900z" fill="#fff"/></g><g stroke="#7a7a7c" stroke-width=".9"><path d="M10.6 13.400l2.800-2.200M10.600 15.900l5.800-4.400M10.600 18.400l8.800-6.600M10.600 20.900l11.800-8.800M12.800 22l10.800-8M16 22.400l7.600-5.600M19.200 22.700l4.400-3.200"/></g></svg></div><div class="btn " style="left:929px;top:726px"><svg width="38" height="30" viewBox="0 0 38 30"><path d="M13.400 10V17a5.850 5.850 0 0 0 11.700 0V10" fill="none" stroke="#747476" stroke-width="3"/><path d="M11.900 11.200h3M23.600 11.200h3" stroke="#4a4a4c" stroke-width="2.400"/><path d="M20.600 4.600l-3 4.200h2.100l-1.100 3.400 3.400-4.600h-2.200z" fill="#4a4a4c"/></svg></div><div class="btn " style="left:974.7px;top:726px"><svg width="38" height="30" viewBox="0 0 38 30"><g transform="translate(19 15)"><circle r="5.9" fill="none" stroke="#4a4a4c" stroke-width="2"/><rect x="-1.25" y="-9.3" width="2.5" height="3.6" fill="#4a4a4c" transform="rotate(0)"/><rect x="-1.25" y="-9.3" width="2.5" height="3.6" fill="#4a4a4c" transform="rotate(30)"/><rect x="-1.25" y="-9.3" width="2.5" height="3.6" fill="#4a4a4c" transform="rotate(60)"/><rect x="-1.25" y="-9.3" width="2.5" height="3.6" fill="#4a4a4c" transform="rotate(90)"/><rect x="-1.25" y="-9.3" width="2.5" height="3.6" fill="#4a4a4c" transform="rotate(120)"/><rect x="-1.25" y="-9.3" width="2.5" height="3.6" fill="#4a4a4c" transform="rotate(150)"/><rect x="-1.25" y="-9.3" width="2.5" height="3.6" fill="#4a4a4c" transform="rotate(180)"/><rect x="-1.25" y="-9.3" width="2.5" height="3.6" fill="#4a4a4c" transform="rotate(210)"/><rect x="-1.25" y="-9.3" width="2.5" height="3.6" fill="#4a4a4c" transform="rotate(240)"/><rect x="-1.25" y="-9.3" width="2.5" height="3.6" fill="#4a4a4c" transform="rotate(270)"/><rect x="-1.25" y="-9.3" width="2.5" height="3.6" fill="#4a4a4c" transform="rotate(300)"/><rect x="-1.25" y="-9.3" width="2.5" height="3.6" fill="#4a4a4c" transform="rotate(330)"/><path d="M0 0L0 -6" stroke="#4a4a4c" stroke-width="1.3" transform="rotate(0)"/><path d="M0 0L0 -6" stroke="#4a4a4c" stroke-width="1.3" transform="rotate(120)"/><path d="M0 0L0 -6" stroke="#4a4a4c" stroke-width="1.3" transform="rotate(240)"/></g></svg></div>
</body></html>
